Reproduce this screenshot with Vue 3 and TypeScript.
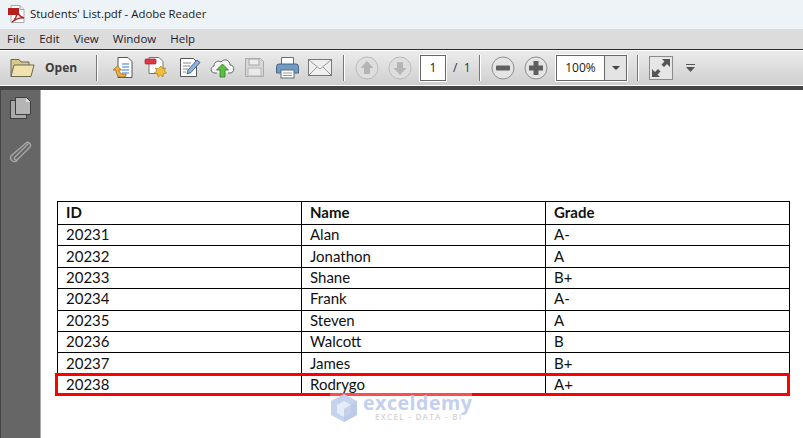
<script setup lang="ts">
const menus: string[] = ['File', 'Edit', 'View', 'Window', 'Help']
interface Row { id: string; name: string; grade: string }
const rows: Row[] = [
  { id: '20231', name: 'Alan', grade: 'A-' },
  { id: '20232', name: 'Jonathon', grade: 'A' },
  { id: '20233', name: 'Shane', grade: 'B+' },
  { id: '20234', name: 'Frank', grade: 'A-' },
  { id: '20235', name: 'Steven', grade: 'A' },
  { id: '20236', name: 'Walcott', grade: 'B' },
  { id: '20237', name: 'James', grade: 'B+' },
  { id: '20238', name: 'Rodrygo', grade: 'A+' },
]
</script>

<template>
  <div class="app">
    <header class="titlebar">
      <svg class="pdf" width="18" height="18" viewBox="0 0 18 18">
        <path d="M3 .5h9l4 4v13H3z" fill="#fff" stroke="#a9a9a9" />
        <path d="M12 .5v4h4" fill="#e4e4e4" stroke="#a9a9a9" />
        <rect x="0" y="3" width="11" height="7" fill="#b3211e" />
        <path d="M4 17c3-2 5-6 5.500-11 .8 4 2.500 6 6.500 7-4-.5-8 1-12 4z" fill="none" stroke="#b3211e" stroke-width="1.400" />
      </svg>
      <span class="title">Students' List.pdf - Adobe Reader</span>
    </header>

    <nav class="menubar">
      <span v-for="m in menus" :key="m">{{ m }}</span>
    </nav>

    <div class="toolbar">
      <div class="tool-open">
        <svg width="25" height="21" viewBox="0 0 25 21">
          <path d="M1 19.500V2.500h8l2 2.500h8v3" fill="#d8c98c" stroke="#6b6658" />
          <path d="M1 19.500 4 8h20l-3 11.500z" fill="#efe2ac" stroke="#6b6658" />
        </svg>
        <b>Open</b>
      </div>
      <i class="sep s1"></i>
      <div class="icons">
        <svg width="24" height="24" viewBox="0 0 24 24">
          <path d="M7 1.500h10l4 4v16H7z" fill="#fff" stroke="#555" />
          <path d="M11 8h7M11 11h7M11 14h7M11 17h7" stroke="#3b78c9" stroke-width="1.200" />
          <path d="M15 20c-6 3-10 0-10-6H2l4.500-4 4 4H8c0 3 3 5 7 4z" fill="#eeb13e" stroke="#9a6b17" stroke-width=".8" />
        </svg>
        <svg width="24" height="24" viewBox="0 0 24 24">
          <path d="M5 1.500h10l4 4v12H5z" fill="#fff" stroke="#777" />
          <rect x="1" y="3" width="11" height="5" rx="1" fill="#e23540" stroke="#a32029" stroke-width=".7" />
          <path d="M17 10l1.500 2.500 3-.5-1 3 2 2-3 .8-.5 3-2.500-1.800-2.500 1.800-.5-3-3-.8 2-2-1-3 3 .5z" fill="#f1bd3c" stroke="#a97f1c" stroke-width=".7" />
        </svg>
        <svg class="edit" width="22" height="21" viewBox="0 0 22 21">
          <path d="M1.500 1.500h13l3 3v15h-16z" fill="#fff" stroke="#555" />
          <path d="M4 6h8M4 9h7M4 12h5M4 15h3" stroke="#888" />
          <path d="M8 17l1-4 9-10 3 2.500-9 10z" fill="#8fb2dc" stroke="#3d5a80" stroke-width=".9" />
        </svg>
        <svg width="25" height="22" viewBox="0 0 25 22">
          <path d="M7 16H5c-5 0-5-6-1-7 0-4 4-6 7-4 3-4 9-2 9 3 5 0 5 8 0 8h-2" fill="#f3f3f3" stroke="#666" />
          <path d="M12.500 7l6 6h-3.500v7h-5v-7H6.500z" fill="#5fbd45" stroke="#2f7f26" stroke-width=".8" />
        </svg>
        <svg width="21" height="21" viewBox="0 0 21 21">
          <path d="M1.500 1.500h15l3 3v15h-18z" fill="#d8d8d8" stroke="#a8a8a8" />
          <rect x="5" y="2" width="10" height="6" fill="#ececec" stroke="#a8a8a8" />
          <rect x="4" y="11" width="13" height="8" fill="#e9e9e9" stroke="#b3b3b3" />
        </svg>
        <svg class="printer" width="23" height="23" viewBox="0 0 23 23">
          <path d="M5.500 8V1.500h12V8" fill="#fff" stroke="#606c7a" />
          <path d="M3 8h17a2.500 2.500 0 0 1 2.500 2.500V17H.5v-6.500A2.500 2.500 0 0 1 3 8z" fill="#6f9bc4" stroke="#4a6680" />
          <rect x="5" y="14" width="13" height="8" fill="#fff" stroke="#606c7a" />
          <path d="M7 17h9M7 19.500h9" stroke="#999" />
        </svg>
        <svg width="24" height="18" viewBox="0 0 24 18">
          <rect x=".5" y=".5" width="23" height="16" fill="#efefef" stroke="#777" />
          <path d="M1 1l11 9 11-9M1 16l8-8M23 16l-8-8" fill="none" stroke="#999" />
        </svg>
      </div>
      <i class="sep s2"></i>
      <div class="round-group">
        <svg width="24" height="24" viewBox="0 0 24 24">
          <circle cx="12" cy="12" r="11" fill="#dedede" stroke="#bbb" />
          <path d="M12 5l6.500 7H15v6H9v-6H5.500z" fill="#b5b5b5" />
        </svg>
        <svg width="24" height="24" viewBox="0 0 24 24">
          <circle cx="12" cy="12" r="11" fill="#dedede" stroke="#bbb" />
          <path d="M12 19l6.500-7H15V6H9v6H5.500z" fill="#b5b5b5" />
        </svg>
      </div>
      <div class="pagebox">1</div>
      <span class="pagecount">/&nbsp;&nbsp;1</span>
      <i class="sep s3"></i>
      <div class="round-group">
        <svg width="24" height="24" viewBox="0 0 24 24">
          <circle cx="12" cy="12" r="11" fill="#e4e4e4" stroke="#8f8f8f" />
          <rect x="5" y="9.500" width="14" height="5" rx="1" fill="#5f5f5f" />
        </svg>
        <svg width="24" height="24" viewBox="0 0 24 24">
          <circle cx="12" cy="12" r="11" fill="#e4e4e4" stroke="#8f8f8f" />
          <path d="M9.500 5h5v4.500H19v5h-4.500V19h-5v-4.500H5v-5h4.500z" fill="#5f5f5f" />
        </svg>
      </div>
      <div class="zoombox">
        <span class="zoomval">100%</span>
        <span class="zoomarrow"><i></i></span>
      </div>
      <i class="sep s4"></i>
      <svg class="fit" width="24" height="24" viewBox="0 0 24 24">
        <rect x=".5" y=".5" width="23" height="23" fill="#e6e6e6" stroke="#8b8b8b" />
        <path d="M13 3h8v8l-3-3-3 3-2.500-2.500 3-3zM11 21H3v-8l3 3 3-3 2.500 2.500-3 3z" fill="#555" />
      </svg>
      <svg class="more" width="9" height="8" viewBox="0 0 9 8">
        <path d="M0 .5h9" stroke="#555" />
        <path d="M0 3h9L4.500 8z" fill="#555" />
      </svg>
    </div>

    <div class="body">
      <aside class="side">
        <svg width="22" height="22" viewBox="0 0 22 22">
          <rect x=".5" y="3.500" width="16" height="18" fill="#a9a9a9" stroke="#3d3d3d" />
          <path d="M5.500.5h11l4 4v13h-15z" fill="#b4b4b4" stroke="#3d3d3d" />
          <path d="M16 1v4h4z" fill="#e0e0e0" />
        </svg>
        <svg width="23" height="24" viewBox="0 0 23 24">
          <path d="M19.500 5 6 18.500c-2 2 .5 4 2.500 2.500L21 8.500c1.800-2.500-1.500-6-4-4L2.500 17c-3 3.500 2 8 6 5" fill="none" stroke="#a8a8a8" stroke-width="1.400" transform="translate(0 -.5)" />
        </svg>
      </aside>
      <main class="page">
        <div class="sheet">
          <table>
            <thead>
              <tr><th>ID</th><th>Name</th><th>Grade</th></tr>
            </thead>
            <tbody>
              <tr v-for="r in rows" :key="r.id">
                <td>{{ r.id }}</td><td>{{ r.name }}</td><td>{{ r.grade }}</td>
              </tr>
            </tbody>
          </table>
          <div class="highlight"></div>
          <div class="watermark">
            <svg width="28" height="30" viewBox="0 0 28 30">
              <path d="M14 1l13 7v14l-13 7L1 22V8z" fill="#c6d3ee" />
              <path d="M14 8l7 4v8l-7 4-7-4v-8z" fill="#e6ecf8" />
              <path d="M14 16l13-8v14l-13 7z" fill="#b7c6e6" opacity=".7" />
            </svg>
            <div class="wm-text">
              <span class="wm-name">exceldemy</span>
              <span class="wm-sub">EXCEL - DATA - BI</span>
            </div>
          </div>
        </div>
      </main>
    </div>
  </div>
</template>

<style scoped>
.app {
  width: 803px;
  height: 438px;
  display: flex;
  flex-direction: column;
  overflow: hidden;
  background: #fff;
  font-family: "Open Sans", sans-serif;
  color: #1a1a1a;
}
.titlebar {
  height: 29px;
  flex: none;
  display: flex;
  align-items: center;
  padding-left: 8px;
  gap: 4px;
  background: #eef3f8;
  font-size: 11.400px;
}
.title { position: relative; top: -1px; }
.pdf { position: relative; top: -1px; }
.menubar {
  height: 18px;
  padding-bottom: 2px;
  flex: none;
  display: flex;
  align-items: center;
  gap: 14px;
  padding-left: 7px;
  background: #dcdcdc;
  font-size: 11.500px;
  color: #1c1c2c;
}
.toolbar {
  height: 35px;
  flex: none;
  display: flex;
  align-items: center;
  border-top: 1px solid #2c2c2c;
  border-bottom: 1px solid #fff;
  box-shadow: inset 0 1px 0 #fff;
  background: linear-gradient(#ececec, #cfcfcf);
  padding-left: 10px;
}
.tool-open {
  display: flex;
  align-items: center;
  gap: 10px;
  width: 68px;
  font-size: 12px;
  color: #3c3c3c;
}
.sep {
  width: 1px;
  height: 26px;
  background: #777;
  box-shadow: 1px 0 0 #fff;
  flex: none;
}
.s1 { margin-left: 18px; }
.s2 { margin-left: 11px; }
.s3 { margin-left: 8px; }
.s4 { margin-left: 10px; }
.icons {
  display: flex;
  align-items: center;
  gap: 9px;
  margin-left: 14px;
}
.edit { margin-left: 2px; }
.printer { margin-left: 2px; }
.round-group {
  display: flex;
  gap: 9px;
  margin-left: 11px;
}
.pagebox {
  width: 26px;
  height: 26px;
  margin-left: 8px;
  box-sizing: border-box;
  border: 1px solid #666;
  outline: 1px solid #fff;
  background: #fff;
  font-size: 12px;
  display: flex;
  align-items: center;
  justify-content: center;
}
.pagecount {
  margin-left: 7px;
  font-size: 12px;
  width: 18px;
  white-space: nowrap;
  color: #333;
}
.zoombox {
  width: 71px;
  height: 26px;
  margin-left: 8px;
  box-sizing: border-box;
  border: 1px solid #666;
  outline: 1px solid #fff;
  background: #fff;
  display: flex;
  font-size: 12px;
}
.zoomval {
  width: 47px;
  display: flex;
  align-items: center;
  justify-content: center;
}
.zoomarrow {
  flex: 1;
  border-left: 1px solid #666;
  background: #e4e4e4;
  display: flex;
  align-items: center;
  justify-content: center;
}
.zoomarrow i {
  width: 0;
  height: 0;
  border: 4px solid transparent;
  border-top: 4px solid #444;
  border-bottom: 0;
}
.fit { margin-left: 11px; }
.more { margin-left: 13px; }
.body {
  flex: 1;
  min-height: 0;
  display: flex;
  border-top: 4px solid #444;
}
.side {
  width: 41px;
  flex: none;
  box-sizing: border-box;
  background: #666;
  border-left: 1px solid #444;
  border-right: 1px solid #aaa;
  display: flex;
  flex-direction: column;
  align-items: center;
  padding-top: 7px;
  gap: 20px;
  box-shadow: 1px 0 0 #222;
}
.page {
  flex: 1;
  background: #fff;
  padding: 111px 13px 0 16px;
}
.sheet {
  position: relative;
  width: 733px;
}
table {
  width: 733px;
  border-collapse: collapse;
  table-layout: fixed;
  font-family: Lato, sans-serif;
  font-size: 15px;
  line-height: 18px;
  color: #111;
}
th, td {
  border: 1px solid #000;
  padding: 0 0 2px 8px;
  text-align: left;
  height: 21.400px;
  box-sizing: border-box;
}
th { height: 23px; font-weight: 700; }
.highlight {
  position: absolute;
  left: -2px;
  right: 0;
  bottom: 0;
  height: 23px;
  box-sizing: border-box;
  border: 3px solid #f00;
}
.watermark {
  position: absolute;
  left: 273px;
  top: 192px;
  display: flex;
  align-items: flex-start;
  gap: 5px;
  background: rgba(255, 255, 255, .3);
}
.wm-text { display: flex; flex-direction: column; }
.wm-name {
  font-family: "Open Sans", sans-serif;
  font-weight: 700;
  font-size: 19.600px;
  line-height: 19px;
  color: #c3d0ee;
  letter-spacing: .5px;
}
.wm-sub {
  font-size: 8px;
  line-height: 10px;
  margin-left: 12px;
  letter-spacing: 1.300px;
  color: #d4d4d4;
  font-weight: 600;
}
</style>

<style>
html, body { margin: 0; padding: 0; background: #fff; }
</style>
